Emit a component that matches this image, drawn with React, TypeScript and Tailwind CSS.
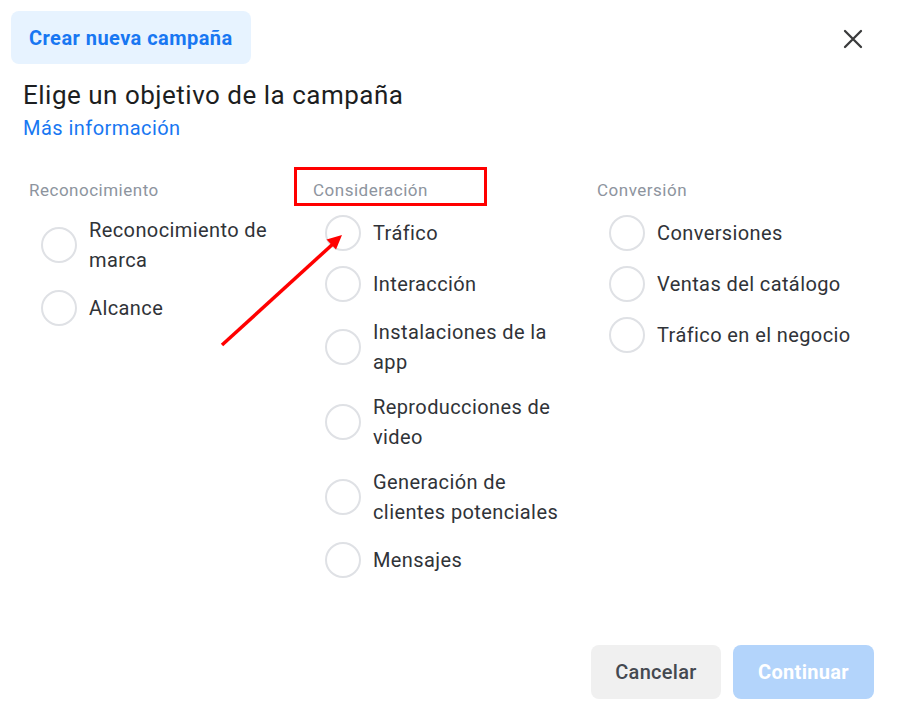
import React from "react";

interface ObjectiveColumnProp {
    title: string;
    options: string[];
}

// una columna de objetivos: título gris y lista de radios
const ObjectiveColumn: React.FC<ObjectiveColumnProp> = ({ title, options }) => {
    return (
        <div className="flex flex-col">
            <div className="text-[17px] leading-[20px] tracking-[0.5px] text-[#8d949e]">{title}</div>
            <div className="mt-[15px] flex flex-col gap-[15px]">
                {options.map((option) => (
                    <label key={option} className="flex items-center">
                        <span className="ml-3 w-9 h-9 shrink-0 rounded-full border-2 border-[#dfe1e5] bg-white" />
                        <span className="ml-3 w-[200px] text-[20px] leading-[30px] tracking-[0.4px] text-[#303338]">{option}</span>
                    </label>
                ))}
            </div>
        </div>
    );
};

const columns: ObjectiveColumnProp[] = [
    { title: "Reconocimiento", options: ["Reconocimiento de marca", "Alcance"] },
    {
        title: "Consideración",
        options: [
            "Tráfico",
            "Interacción",
            "Instalaciones de la app",
            "Reproducciones de video",
            "Generación de clientes potenciales",
            "Mensajes",
        ],
    },
    { title: "Conversión", options: ["Conversiones", "Ventas del catálogo", "Tráfico en el negocio"] },
];

export default function App() {
    return (
        <div className="relative w-[898px] h-[712px] overflow-hidden bg-white flex flex-col font-['Roboto','Liberation_Sans',sans-serif]">
            {/* cabecera con pestaña y botón de cerrar */}
            <div className="flex items-start justify-between pt-[11px] pl-[11px] pr-[33px]">
                <div className="h-[53px] w-[240px] rounded-lg bg-[#e7f3ff] px-[18px] flex items-center text-[20px] tracking-[0.45px] font-bold text-[#1877f2]">
                    Crear nueva campaña
                </div>
                <button className="mt-[16px] w-[24px] h-[24px] flex items-center justify-center">
                    <svg viewBox="0 0 24 24" className="w-[24px] h-[24px]" fill="none" stroke="#3a3b3c" strokeWidth="2.3" strokeLinecap="round">
                        <path d="M4 4L20 20M20 4L4 20" />
                    </svg>
                </button>
            </div>

            <div className="ml-[23px] mt-[15px] text-[26px] leading-[32px] tracking-[0.5px] text-[#1c1e21]">Elige un objetivo de la campaña</div>
            <a className="ml-[23px] mt-[5px] text-[20px] leading-[24px] tracking-[0.45px] text-[#1877f2]">Más información</a>

            {/* columnas de objetivos */}
            <div className="mt-[40px] ml-[29px] grid grid-cols-[284px_284px_284px]">
                {columns.map((col) => (
                    <ObjectiveColumn key={col.title} title={col.title} options={col.options} />
                ))}
            </div>

            <div className="flex-1" />

            {/* botones */}
            <div className="flex justify-end gap-3 pr-[24px] pb-[13px]">
                <button className="h-[54px] w-[130px] rounded-lg bg-[#f0f0f0] text-[20px] tracking-[0.3px] font-medium text-[#444950]">
                    Cancelar
                </button>
                <button className="h-[54px] w-[141px] rounded-lg bg-[#b3d4fb] text-[20px] tracking-[0.3px] font-bold text-white">
                    Continuar
                </button>
            </div>

            {/* marca roja y flecha */}
            <div className="absolute left-[294px] top-[167px] w-[193px] h-[39px] border-[3px] border-[#ff0000]" />
            <svg className="absolute inset-0 pointer-events-none" width="898" height="712">
                <line x1="222" y1="345" x2="334" y2="243" stroke="#ff0000" strokeWidth="3.5" />
                <polygon points="342,235 336,249.5 326.5,239.5" fill="#ff0000" />
            </svg>
        </div>
    );
}
